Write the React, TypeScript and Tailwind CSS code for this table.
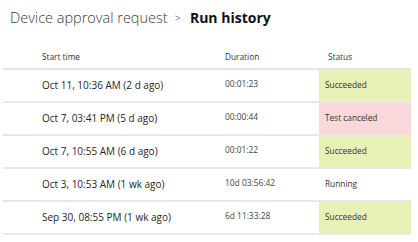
import React from 'react'

type Run = {
  start: string
  duration: string
  status: string
  tone: 'ok' | 'cancel' | 'none'
}

const runs: Run[] = [
  { start: 'Oct 11, 10:36 AM (2 d ago)', duration: '00:01:23', status: 'Succeeded', tone: 'ok' },
  { start: 'Oct 7, 03:41 PM (5 d ago)', duration: '00:00:44', status: 'Test canceled', tone: 'cancel' },
  { start: 'Oct 7, 10:55 AM (6 d ago)', duration: '00:01:22', status: 'Succeeded', tone: 'ok' },
  { start: 'Oct 3, 10:53 AM (1 wk ago)', duration: '10d 03:56:42', status: 'Running', tone: 'none' },
  { start: 'Sep 30, 08:55 PM (1 wk ago)', duration: '6d 11:33:28', status: 'Succeeded', tone: 'ok' },
]

const toneClass = {
  ok: 'bg-[#e7f1b6]',
  cancel: 'bg-[#f9d7db]',
  none: 'bg-white',
}

export default function App() {
  return (
    <div className="w-[418px] h-[242px] bg-white overflow-hidden font-['Open_Sans',sans-serif]">
      <div className="flex items-center pt-[8px] pl-[10px] text-[14.5px] leading-[20px]">
        <span className="font-light text-[#3a3a3a]">Device approval request</span>
        <span className="ml-[7px] mr-[9px] text-[11px] text-[#8a8a8a]">&gt;</span>
        <span className="font-bold text-[14px] text-[#111]">Run history</span>
      </div>

      <div className="mt-[18px] ml-[3px] w-[408px]">
        <div className="grid grid-cols-[219px_97px_92px] h-[24px] items-center border-b-2 border-[#e4e4e4] text-[8.3px] text-[#333]">
          <div className="pl-[39px]">Start time</div>
          <div className="pl-[3px]">Duration</div>
          <div className="pl-[9px]">Status</div>
        </div>

        {runs.map((run) => (
          <div
            key={run.start}
            className="grid grid-cols-[219px_97px_92px] h-[33px] border-b-2 border-[#e8e8e8]"
          >
            <div className="flex items-center pl-[39px] text-[10px] text-[#262626]">{run.start}</div>
            <div className="flex items-center pl-[3px] pb-[3px] text-[8.4px] text-[#444]">{run.duration}</div>
            <div className={`flex items-center pl-[6px] text-[8.3px] text-[#333] ${toneClass[run.tone]}`}>
              {run.status}
            </div>
          </div>
        ))}
      </div>
    </div>
  )
}
